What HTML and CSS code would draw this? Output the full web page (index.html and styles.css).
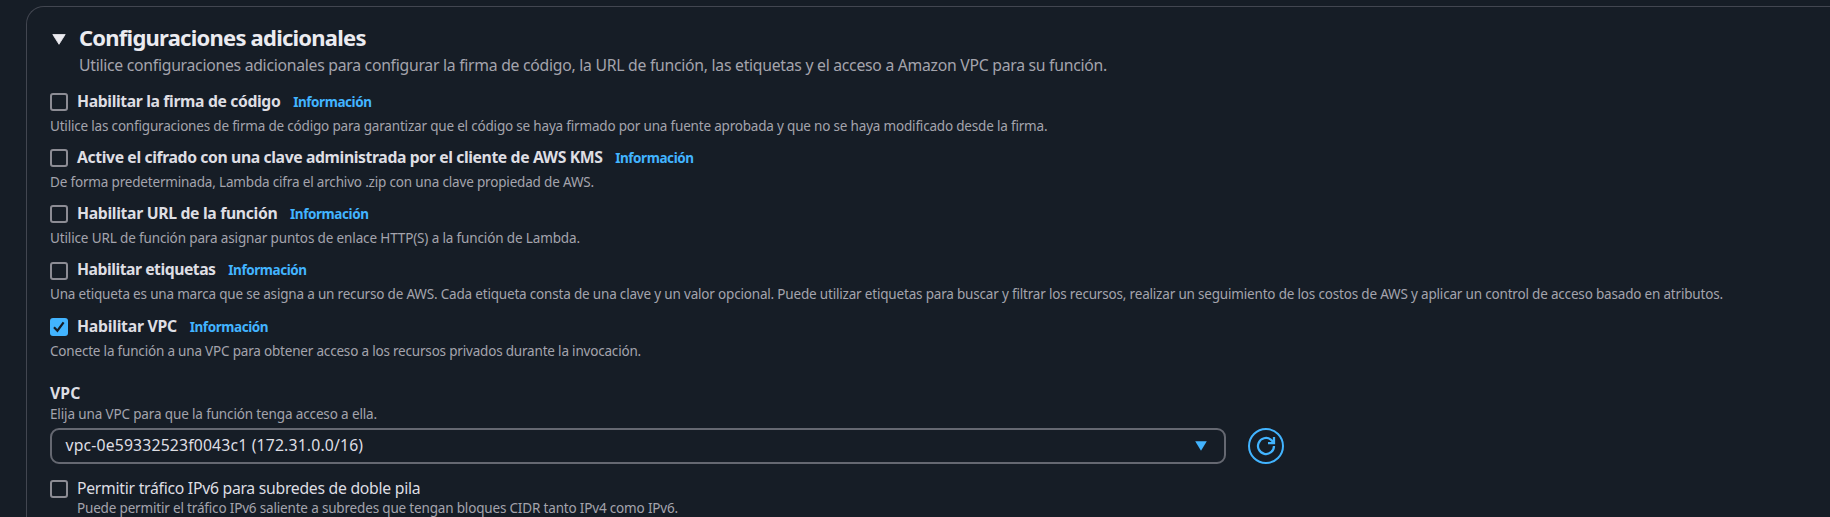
FILE: index.html
```html
<!DOCTYPE html>
<html lang="es">
<head>
<meta charset="utf-8">
<title>Configuraciones adicionales</title>
<link rel="stylesheet" href="styles.css">
</head>
<body>
<main class="panel">
  <header class="panel-header">
    <svg class="caret" viewBox="0 0 14 11"><path d="M.8.5h12.4L7 10.3z"/></svg>
    <div class="heading">
      <h2 class="title">Configuraciones adicionales</h2>
      <p class="description">Utilice configuraciones adicionales para configurar la firma de código, la URL de función, las etiquetas y el acceso a Amazon VPC para su función.</p>
    </div>
  </header>

  <section class="options">
    <div class="option signing">
      <div class="option-line"><span class="checkbox"></span><span class="label">Habilitar la firma de código</span><a class="info">Información</a></div>
      <p class="help">Utilice las configuraciones de firma de código para garantizar que el código se haya firmado por una fuente aprobada y que no se haya modificado desde la firma.</p>
    </div>
    <div class="option kms">
      <div class="option-line"><span class="checkbox"></span><span class="label">Active el cifrado con una clave administrada por el cliente de AWS KMS</span><a class="info">Información</a></div>
      <p class="help">De forma predeterminada, Lambda cifra el archivo .zip con una clave propiedad de AWS.</p>
    </div>
    <div class="option url">
      <div class="option-line"><span class="checkbox"></span><span class="label">Habilitar URL de la función</span><a class="info">Información</a></div>
      <p class="help">Utilice URL de función para asignar puntos de enlace HTTP(S) a la función de Lambda.</p>
    </div>
    <div class="option tags">
      <div class="option-line"><span class="checkbox"></span><span class="label">Habilitar etiquetas</span><a class="info">Información</a></div>
      <p class="help">Una etiqueta es una marca que se asigna a un recurso de AWS. Cada etiqueta consta de una clave y un valor opcional. Puede utilizar etiquetas para buscar y filtrar los recursos, realizar un seguimiento de los costos de AWS y aplicar un control de acceso basado en atributos.</p>
    </div>
    <div class="option vpc">
      <div class="option-line"><span class="checkbox checked"><svg viewBox="0 0 18 18"><path d="M4 9.3l3.4 3.4L13.6 4.4"/></svg></span><span class="label">Habilitar VPC</span><a class="info">Información</a></div>
      <p class="help">Conecte la función a una VPC para obtener acceso a los recursos privados durante la invocación.</p>
    </div>
  </section>

  <section class="field">
    <div class="label">VPC</div>
    <p class="help">Elija una VPC para que la función tenga acceso a ella.</p>
    <div class="select-row">
      <div class="select">
        <span class="value">vpc-0e59332523f0043c1 (172.31.0.0/16)</span>
        <svg class="select-caret" viewBox="0 0 12 10"><path d="M.2.2h11.6L6 9.8z"/></svg>
      </div>
      <button class="refresh" type="button" aria-label="Actualizar">
        <svg viewBox="0 0 18 18"><path d="M17 9a8 8 0 1 1-3.2-6.4L17 5.6M17 0v6h-6"/></svg>
      </button>
    </div>
  </section>

  <section class="ipv6">
    <div class="option-line"><span class="checkbox"></span><span class="label">Permitir tráfico IPv6 para subredes de doble pila</span></div>
    <p class="help">Puede permitir el tráfico IPv6 saliente a subredes que tengan bloques CIDR tanto IPv4 como IPv6.</p>
  </section>
</main>
</body>
</html>
```
FILE: styles.css
```css
* { box-sizing: border-box; }

html, body { height: 100%; }

body {
  margin: 0;
  padding: 6px 0 0 26px;
  overflow: hidden;
  background: #161d26;
  color: #dedee3;
  font-family: "Noto Sans", sans-serif;
}

.panel {
  height: 100%;
  padding: 17px 0 0 23px;
  border: 1px solid #424650;
  border-width: 1px 0 0 1px;
  border-radius: 18px 0 0 0;
  white-space: nowrap;
}

.title, .description, .help { margin: 0; }

.panel-header { display: flex; gap: 13px; }

.caret {
  width: 14px;
  height: 11px;
  margin: 10px 0 0 2px;
  fill: #ebebf0;
  stroke: #ebebf0;
  stroke-width: 0.8;
}

.title {
  color: #ebebf0;
  font-size: 22px;
  line-height: 27px;
  letter-spacing: -0.77px;
}

.description {
  margin-top: 2.5px;
  color: #a4a4ad;
  font-size: 15.75px;
  line-height: 22.5px;
  letter-spacing: -0.269px;
}

.options {
  display: flex;
  flex-direction: column;
  gap: 11.25px;
  margin-top: 13.5px;
}

.option { display: flex; flex-direction: column; gap: 4.5px; }

.option-line {
  display: flex;
  align-items: baseline;
  height: 22.5px;
}

.checkbox {
  flex: none;
  align-self: flex-start;
  width: 18px;
  height: 18px;
  margin: 3.4px 9px 0 0;
  border: 2px solid #8c8c94;
  border-radius: 3px;
}

.checked { border: 0; background: #42b4ff; }

.checked svg {
  display: block;
  width: 18px;
  height: 18px;
  fill: none;
  stroke: #161d26;
  stroke-width: 2.2;
}

.label {
  font-size: 15.75px;
  font-weight: 700;
  line-height: 22.5px;
}

.info {
  margin-left: 12.7px;
  color: #42b4ff;
  font-size: 13.5px;
  font-weight: 700;
  line-height: 18px;
  letter-spacing: -0.43px;
}

.help {
  color: #a4a4ad;
  font-size: 13.5px;
  line-height: 18px;
}

.signing .label { letter-spacing: -0.37px; }
.signing .help { letter-spacing: -0.187px; }
.kms .label { letter-spacing: -0.385px; }
.kms .help { letter-spacing: -0.172px; }
.url .label { letter-spacing: -0.33px; }
.url .checkbox { margin-top: 3px; }
.url .help { letter-spacing: -0.137px; }
.tags .label { letter-spacing: -0.48px; }
.tags .help { letter-spacing: -0.183px; }
.vpc .label { letter-spacing: -0.238px; }
.vpc .help { letter-spacing: -0.19px; }

.field { margin-top: 22px; }
.field .label { letter-spacing: 0.1px; }
.field .help { margin-top: 0.5px; letter-spacing: -0.137px; }

.select-row {
  display: flex;
  gap: 22px;
  margin-top: 5.5px;
}

.select {
  display: flex;
  align-items: center;
  justify-content: space-between;
  width: 1176px;
  height: 36px;
  padding: 0 17px 0 13.5px;
  border: 2px solid #656871;
  border-radius: 9px;
}

.value {
  margin-top: -1px;
  font-size: 15.75px;
  line-height: 22.5px;
  letter-spacing: 0.17px;
}

.select-caret { width: 12px; height: 10px; fill: #42b4ff; }

.refresh {
  display: grid;
  place-items: center;
  width: 36px;
  height: 36px;
  padding: 0;
  border: 2px solid #42b4ff;
  border-radius: 50%;
  background: none;
}

.refresh svg {
  width: 18px;
  height: 18px;
  overflow: visible;
  fill: none;
  stroke: #42b4ff;
  stroke-width: 2.25;
}

.ipv6 { margin-top: 12.5px; }
.ipv6 .label { font-weight: 400; letter-spacing: -0.27px; }
.ipv6 .help { padding-left: 27px; letter-spacing: -0.172px; }
```
